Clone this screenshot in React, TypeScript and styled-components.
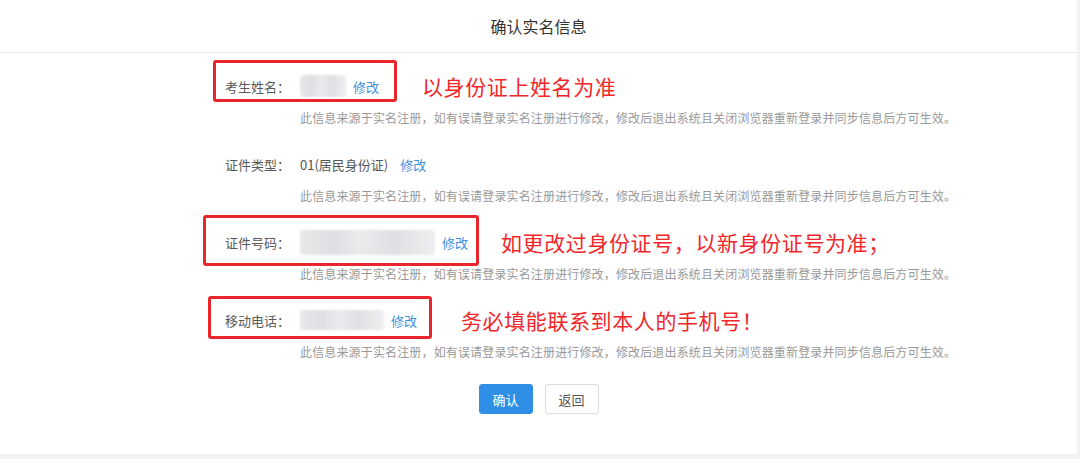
import React from "react";
import styled, { createGlobalStyle } from "styled-components";

interface Inset {
  top: number;
  right: number;
  bottom: number;
  left: number;
}

interface FieldInfo {
  id: number;
  label: string;
  value?: string;
  blur?: { width: number; height: number };
  note?: string;
  noteGap?: number;
  mark?: Inset;
}

const DESC =
  "此信息来源于实名注册，如有误请登录实名注册进行修改，修改后退出系统且关闭浏览器重新登录并同步信息后方可生效。";

const fields: FieldInfo[] = [
  {
    id: 1,
    label: "考生姓名：",
    blur: { width: 46, height: 22 },
    note: "以身份证上姓名为准",
    noteGap: 43,
    mark: { top: -11, right: -18, bottom: -1, left: -12 },
  },
  { id: 2, label: "证件类型：", value: "01(居民身份证)" },
  {
    id: 3,
    label: "证件号码：",
    blur: { width: 135, height: 25 },
    note: "如更改过身份证号，以新身份证号为准；",
    noteGap: 33,
    mark: { top: -12, right: -11, bottom: -9, left: -22 },
  },
  {
    id: 4,
    label: "移动电话：",
    blur: { width: 84, height: 20 },
    note: "务必填能联系到本人的手机号！",
    noteGap: 44,
    mark: { top: -9, right: -15, bottom: -4, left: -17 },
  },
];

const App = () => {
  return (
    <>
      <GlobalStyle />
      <Card>
        <Header>确认实名信息</Header>
        <Form>
          {fields.map((f) => (
            <Block key={f.id}>
              <Field>
                <Main>
                  <Label>{f.label}</Label>
                  {f.value && <Value>{f.value}</Value>}
                  {f.blur && (
                    <Blurred $w={f.blur.width} $h={f.blur.height} />
                  )}
                  <EditLink>修改</EditLink>
                  {f.mark && <Mark $inset={f.mark} />}
                </Main>
                {f.note && <Note $gap={f.noteGap || 30}>{f.note}</Note>}
              </Field>
              <Desc>{DESC}</Desc>
            </Block>
          ))}
        </Form>
        <Actions>
          <Button $primary>确认</Button>
          <Button>返回</Button>
        </Actions>
      </Card>
    </>
  );
};

const GlobalStyle = createGlobalStyle`
  html, body {
    margin: 0;
    padding: 0;
    background: #f3f3f4;
    font-family: "Noto Sans CJK SC", "Noto Sans", sans-serif;
  }
`;

const Card = styled.div`
  background: #fff;
  height: 454px;
  margin-right: 3px;
  box-sizing: border-box;
`;

const Header = styled.div`
  height: 52px;
  line-height: 52px;
  text-align: center;
  font-size: 16px;
  color: #333;
  border-bottom: 1px solid #e8e8ea;
`;

const Form = styled.div`
  padding: 18px 0 0 225px;
  display: flex;
  flex-direction: column;
  gap: 22px;
`;

const Block = styled.div`
  display: flex;
  flex-direction: column;
  gap: 8px;
`;

const Field = styled.div`
  display: flex;
  align-items: center;
  height: 30px;
`;

const Main = styled.div`
  position: relative;
  display: flex;
  align-items: center;
  height: 30px;
`;

const Label = styled.span`
  width: 75px;
  font-size: 13px;
  color: #5a5a5a;
  white-space: nowrap;
`;

const Value = styled.span`
  font-size: 13px;
  color: #555;
  margin-right: 12px;
`;

const Blurred = styled.span<{ $w: number; $h: number }>`
  display: inline-block;
  width: ${(p) => p.$w}px;
  height: ${(p) => p.$h}px;
  margin-right: 7px;
  border-radius: 4px;
  background: linear-gradient(
    90deg,
    #e8e8eb 0%,
    #dfdfe3 25%,
    #ebebee 45%,
    #e0e0e4 70%,
    #efeff1 100%
  );
  filter: blur(1.2px);
`;

const EditLink = styled.a`
  font-size: 13px;
  color: #3d8fe0;
  cursor: pointer;
`;

const Mark = styled.span<{ $inset: Inset }>`
  position: absolute;
  top: ${(p) => p.$inset.top}px;
  right: ${(p) => p.$inset.right}px;
  bottom: ${(p) => p.$inset.bottom}px;
  left: ${(p) => p.$inset.left}px;
  border: 3px solid #e8262b;
  border-radius: 3px;
  pointer-events: none;
`;

const Note = styled.span<{ $gap: number }>`
  margin-left: ${(p) => p.$gap}px;
  font-size: 21px;
  letter-spacing: 0.6px;
  color: #f2262b;
  white-space: nowrap;
  line-height: 30px;
`;

const Desc = styled.div`
  margin-left: 75px;
  font-size: 12px;
  letter-spacing: 0.15px;
  line-height: 18px;
  color: #999;
  white-space: nowrap;
`;

const Actions = styled.div`
  display: flex;
  justify-content: center;
  gap: 12px;
  margin-top: 23px;
`;

const Button = styled.button<{ $primary?: boolean }>`
  width: 54px;
  height: 30px;
  border-radius: 3px;
  font-family: inherit;
  font-size: 13px;
  cursor: pointer;
  border: 1px solid ${(p) => (p.$primary ? "#2f8fe6" : "#dcdcdf")};
  background: ${(p) => (p.$primary ? "#2f8fe6" : "#fff")};
  color: ${(p) => (p.$primary ? "#fff" : "#555")};
`;

export default App;
